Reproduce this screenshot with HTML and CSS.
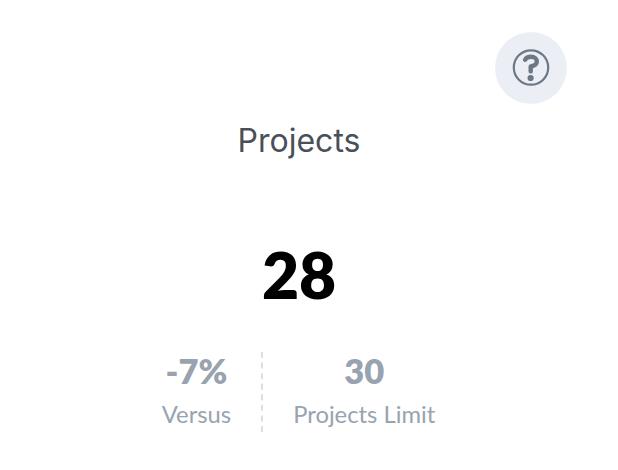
FILE: index.html
```html
<!DOCTYPE html>
<html lang="en">
<head>
<meta charset="utf-8">
<title>Projects</title>
<link rel="stylesheet" href="styles.css">
</head>
<body>
<main class="card">
  <button class="help" type="button" aria-label="Help">
    <svg class="help-icon" viewBox="0 0 38 38" fill="none" stroke="currentColor">
      <circle cx="19" cy="18.5" r="17.2" stroke-width="2.2"/>
      <path d="M13.1 10.7C14.2 8.7 16.4 7.8 19 7.8C22.6 7.8 24.8 9.7 24.8 12.4C24.8 15 22.6 16.7 18.7 17.4V22.4" stroke-width="4.4" stroke-linecap="round" stroke-linejoin="round"/>
      <circle cx="18.6" cy="29" r="3.1" fill="currentColor" stroke="none"/>
    </svg>
  </button>
  <h1 class="title">Projects</h1>
  <div class="count">28</div>
  <div class="stats">
    <div class="stat">
      <div class="value">-7%</div>
      <div class="label">Versus</div>
    </div>
    <div class="stat stat-limit">
      <div class="value">30</div>
      <div class="label">Projects Limit</div>
    </div>
  </div>
</main>
</body>
</html>
```
FILE: styles.css
```css
* {
  box-sizing: border-box;
}

body {
  margin: 0;
  background: #fff;
  font-family: Lato, "Liberation Sans", sans-serif;
}

.card {
  display: flex;
  flex-direction: column;
  align-items: center;
  width: 598px;
  height: 470px;
  padding-top: 32px;
}

.help {
  display: flex;
  align-items: center;
  justify-content: center;
  align-self: flex-end;
  width: 72px;
  height: 72px;
  margin-right: 31px;
  padding: 0;
  border: 0;
  border-radius: 50%;
  background: #ebeff5;
  color: #6c7883;
}

.help-icon {
  width: 38px;
  height: 38px;
}

.title {
  margin: 17px 0 0;
  font: 400 32px/40px Inter, sans-serif;
  color: #495057;
}

.count {
  margin-top: 74px;
  font-size: 64px;
  font-weight: 800;
  line-height: 80px;
  color: #000;
}

.stats {
  display: flex;
  height: 80px;
  margin: 37px 1px 0 0;
}

.stat {
  display: flex;
  flex-direction: column;
  align-items: center;
  padding-right: 30px;
  white-space: nowrap;
  color: #98a3af;
}

.stat-limit {
  padding: 0 0 0 30px;
  border-left: 2px dashed #d9dfe5;
}

.value {
  font-size: 34.5px;
  font-weight: 800;
  line-height: 37px;
}

.label {
  margin-top: 7px;
  font-size: 23.8px;
  line-height: 36px;
}
```
